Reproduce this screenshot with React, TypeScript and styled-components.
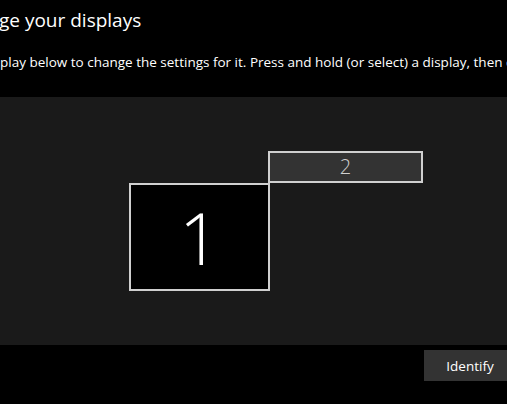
import styled, { createGlobalStyle } from "styled-components";

const Global = createGlobalStyle`
  html, body {
    margin: 0;
    padding: 0;
    background: #000;
    overflow: hidden;
  }
  body {
    font-family: "Open Sans", "Noto Sans", sans-serif;
    color: #fff;
  }
`;

const monitors = [
  { id: 1, left: 129, top: 86, width: 141, height: 108, active: true },
  { id: 2, left: 268, top: 54, width: 155, height: 32, active: false },
];

const App = () => {
  return (
    <Page>
      <Global />
      <Title>ge your displays</Title>
      <Subtitle>
        play below to change the settings for it. Press and hold (or select) a
        display, then d
      </Subtitle>
      <Canvas>
        {monitors.map((m) => (
          <Monitor
            key={m.id}
            $active={m.active}
            style={{ left: m.left, top: m.top, width: m.width, height: m.height }}
          >
            <Label $active={m.active}>{m.id}</Label>
          </Monitor>
        ))}
      </Canvas>
      <Footer>
        <Button>Identify</Button>
      </Footer>
    </Page>
  );
};

export default App;

const Page = styled.div`
  width: 507px;
  height: 404px;
  display: flex;
  flex-direction: column;
  overflow: hidden;
`;

const Title = styled.div`
  font-size: 19px;
  font-weight: 400;
  line-height: 26px;
  margin: 7px 0 0 -1px;
  white-space: nowrap;
  color: #fff;
`;

const Subtitle = styled.div`
  font-size: 13.5px;
  line-height: 20px;
  margin-top: 19px;
  white-space: nowrap;
  color: #fff;
`;

const Canvas = styled.div`
  position: relative;
  margin-top: 25px;
  height: 248px;
  background: #1a1a1a;
  flex-shrink: 0;
`;

const Monitor = styled.div<{ $active: boolean }>`
  position: absolute;
  box-sizing: border-box;
  border: 2px solid #d0d0d0;
  background: ${(p) => (p.$active ? "#000" : "#333")};
  display: flex;
  align-items: center;
  justify-content: center;
`;

const Label = styled.span<{ $active: boolean }>`
  font-size: ${(p) => (p.$active ? "72px" : "20px")};
  font-weight: 300;
  line-height: 1;
  color: ${(p) => (p.$active ? "#fff" : "#d0d0d0")};
`;

const Footer = styled.div`
  display: flex;
  justify-content: flex-end;
  padding-top: 5px;
  margin-right: -9px;
`;

const Button = styled.div`
  width: 92px;
  height: 31px;
  background: #333;
  color: #fff;
  font-size: 13.5px;
  display: flex;
  align-items: center;
  justify-content: center;
`;
